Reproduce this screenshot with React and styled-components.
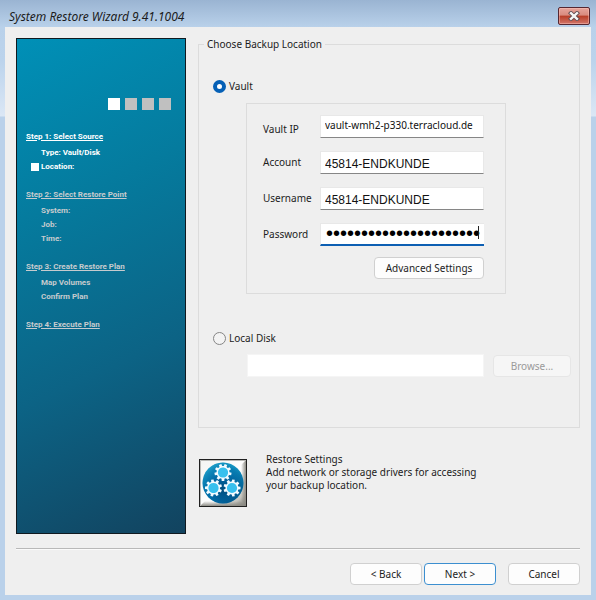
import React, { useState } from "react";
import styled, { createGlobalStyle, css } from "styled-components";

const GlobalStyle = createGlobalStyle`
  *, *::before, *::after { box-sizing: border-box; }
  body { margin: 0; font: 10px/13px "Noto Sans", sans-serif; color: #1c1c1c; }
  button, input { font: inherit; color: inherit; }
`;

const Window = styled.div`
  min-height: 100vh;
  display: flex;
  flex-direction: column;
  padding: 0 5px 5px;
  background:
    linear-gradient(#9ab4d2 0, #b9d1ea 27px, #bbd3ec 60px, #dbe7f5 116px, transparent 117px),
    #bad1ea;
`;

const TitleBar = styled.header`
  height: 27px;
  display: flex;
  align-items: center;
  justify-content: space-between;
  padding: 5px 1px 0 4px;
`;

const Title = styled.h1`
  margin: 0;
  font-size: 12px;
  font-weight: 400;
  font-style: italic;
`;

const CloseButton = styled.button`
  display: grid;
  place-items: center;
  width: 32px;
  height: 18px;
  padding: 0;
  margin-bottom: 1px;
  border: 1px solid #552731;
  border-radius: 2px;
  background: linear-gradient(#e6a49b 0%, #d88a7e 45%, #b83d27 50%, #d2766a 100%);
  box-shadow: inset 0 0 0 1px rgba(255, 200, 190, 0.45);
`;

const Body = styled.main`
  flex: 1;
  display: flex;
  flex-direction: column;
  padding: 11px 11px 10px;
  background: #efefef;
`;

const Columns = styled.div`
  flex: 1;
  display: flex;
  gap: 12px;
`;

const Sidebar = styled.nav`
  flex: 0 0 170px;
  border: 1px solid #10191f;
  padding: 59px 9px 0;
  background: linear-gradient(155deg, #0090b7 0%, #057b9e 32%, #0c6385 65%, #12435f 100%);
  color: #c6cbce;
  font-family: Roboto, sans-serif;
  font-size: 8px;
  line-height: 14px;
  font-weight: 700;
`;

const Progress = styled.div`
  display: flex;
  justify-content: flex-end;
  gap: 5px;
  padding-right: 5px;
  margin-bottom: 20px;
`;

const ProgressBox = styled.span`
  width: 12px;
  height: 12px;
  background: ${(p) => (p.$current ? "#fff" : "#c0c0c0")};
`;

const Step = styled.section`
  margin-bottom: 14px;
  color: ${(p) => (p.$current ? "#fff" : "inherit")};
`;

const StepTitle = styled.h2`
  margin: 0 0 2px;
  font-size: inherit;
  text-decoration: underline;
`;

const StepItem = styled.div`
  display: flex;
  align-items: center;
  gap: 2px;
  padding-left: ${(p) => (p.$active ? "5px" : "15px")};
`;

const Marker = styled.span`
  width: 8px;
  height: 8px;
  background: #fff;
`;

const Content = styled.div`
  flex: 1;
  min-width: 0;
`;

const Group = styled.fieldset`
  margin: 0;
  min-width: 0;
  border: 1px solid #dcdcdc;
  padding: 28px 8px 50px 14px;
`;

const Legend = styled.legend`
  margin-left: -9px;
  padding: 0 3px;
`;

const RadioLabel = styled.label`
  display: flex;
  align-items: center;
  gap: 3px;
  height: 14px;
`;

const Radio = styled.input`
  appearance: none;
  width: 13px;
  height: 13px;
  margin: 0;
  border: 1px solid #858585;
  border-radius: 50%;
  background: #f3f3f3;
  &:checked {
    border: 4px solid #0560b6;
    background: #fff;
  }
`;

const VaultPanel = styled.div`
  display: flex;
  flex-direction: column;
  gap: 13px;
  margin: 10px 65px 37px 33px;
  padding: 11px 21px 14px 16px;
  border: 1px solid #dcdcdc;
`;

const FieldRow = styled.div`
  display: flex;
  align-items: center;
  height: 23px;
`;

const FieldLabel = styled.label`
  flex: 0 0 57px;
  padding-top: ${(p) => (p.$low ? "6px" : "0")};
`;

const InputWrap = styled.div`
  position: relative;
  flex: 1;
  min-width: 0;
`;

const TextInput = styled.input`
  display: block;
  width: 100%;
  height: 23px;
  margin: 0;
  padding: 2px 4px 0;
  border: 1px solid #e8e8e8;
  border-bottom-color: #868686;
  background: #fff;
  color: #111;
  outline: none;
  font: 12px "Liberation Sans", sans-serif;
  ${(p) => p.$host && css`
    padding: 0 4px 4px;
    font: 10px "Noto Sans", sans-serif;
  `}
  ${(p) => p.$focused && css`
    padding: 0 4px 2px 5px;
    border-right: 0;
    border-bottom: 2px solid #0d5fb3;
    color: #000;
    font: 20px "Liberation Sans", sans-serif;
  `}
  ${(p) => p.$plain && css`
    border-color: #f5f5f5;
  `}
`;

const Caret = styled.span`
  position: absolute;
  top: 3px;
  right: 5px;
  width: 1px;
  height: 13px;
  background: #222;
`;

const Button = styled.button`
  height: 22px;
  width: ${(p) => p.$width || "72px"};
  padding: 0;
  border: 1px solid ${(p) => (p.$primary ? "#3c8fd0" : "#d0d0d0")};
  border-radius: 4px;
  background: #fdfdfd;
  line-height: 18px;
  &:disabled {
    color: #9a9a9a;
    background: #f6f6f6;
    border-color: #e6e6e6;
  }
`;

const AdvancedButton = styled(Button)`
  align-self: flex-end;
  margin-top: -2px;
`;

const DiskRow = styled.div`
  display: flex;
  align-items: center;
  gap: 9px;
  margin: 9px 0 0 34px;
`;

const SettingsInfo = styled.section`
  display: flex;
  gap: 19px;
  margin: 31px 0 0 1px;
`;

const SettingsButton = styled.button`
  flex: none;
  width: 48px;
  height: 48px;
  padding: 0;
  border: 1px solid #202020;
  background: #fff;
`;

const SettingsText = styled.div`
  margin-top: -6px;
  max-width: 230px;
`;

const SettingsHeading = styled.h2`
  margin: 0;
  font-size: inherit;
  font-weight: 400;
`;

const Description = styled.p`
  margin: 0;
`;

const Divider = styled.hr`
  width: 100%;
  height: 2px;
  margin: 14px 0 13px;
  border: 0;
  border-top: 1px solid #b8b8b8;
  border-bottom: 1px solid #fafafa;
`;

const Footer = styled.footer`
  display: flex;
  justify-content: flex-end;
  gap: 2px;
`;

const CancelButton = styled(Button)`
  margin-left: 10px;
`;

const gearPath = (() => {
  const teeth = 9;
  const points = [];
  for (let i = 0; i < teeth; i += 1) {
    const mid = (i / teeth) * Math.PI * 2;
    [[-0.22, 6.5], [-0.15, 8.6], [0.15, 8.6], [0.22, 6.5]].forEach(([offset, r]) => {
      const a = mid + offset;
      points.push(`${(Math.cos(a) * r).toFixed(2)} ${(Math.sin(a) * r).toFixed(2)}`);
    });
  }
  return `M${points.join("L")}Z`;
})();

const gears = [[23, 12.5, 10], [13.5, 28, 22], [32, 28, 0]];

function GearsIcon() {
  return (
    <svg width="46" height="46" viewBox="0 0 46 46" aria-hidden="true" display="block">
      <defs>
        <linearGradient id="bevel" x1="0" y1="0" x2="1" y2="1">
          <stop offset="0" stopColor="#f4f4f2" />
          <stop offset="0.6" stopColor="#ffffff" />
          <stop offset="0.85" stopColor="#c4c3bc" />
          <stop offset="1" stopColor="#77766f" />
        </linearGradient>
        <linearGradient id="edgeRight" x1="0" y1="0" x2="1" y2="0">
          <stop offset="0" stopColor="#8d8c85" stopOpacity="0" />
          <stop offset="1" stopColor="#8d8c85" />
        </linearGradient>
        <linearGradient id="edgeBottom" x1="0" y1="0" x2="0" y2="1">
          <stop offset="0" stopColor="#8d8c85" stopOpacity="0" />
          <stop offset="1" stopColor="#8d8c85" />
        </linearGradient>
        <radialGradient id="globe" cx="0.5" cy="0.65" r="0.62">
          <stop offset="0" stopColor="#004878" />
          <stop offset="0.45" stopColor="#0065a2" />
          <stop offset="0.85" stopColor="#087fb4" />
          <stop offset="1" stopColor="#1595c2" />
        </radialGradient>
        <linearGradient id="shade" x1="0" y1="0" x2="1" y2="1">
          <stop offset="0" stopColor="#39c2e4" stopOpacity="0.7" />
          <stop offset="0.4" stopColor="#0879ae" stopOpacity="0" />
          <stop offset="1" stopColor="#00345f" stopOpacity="0.65" />
        </linearGradient>
      </defs>
      <rect width="46" height="46" fill="url(#bevel)" />
      <path d="M46 0V46L41 41V5Z" fill="url(#edgeRight)" />
      <path d="M0 46H46L41 41H5Z" fill="url(#edgeBottom)" />
      <path d="M0.5 46V0.5H46" fill="none" stroke="#b9b9b6" />
      <circle cx="23" cy="23" r="20.5" fill="url(#globe)" />
      <circle cx="23" cy="23" r="20.5" fill="url(#shade)" />
      {gears.map(([x, y, turn]) => (
        <g key={`${x}-${y}`} transform={`translate(${x} ${y}) rotate(${turn})`}>
          <path d={gearPath} fill="#f4fbff" />
          <circle r="5.1" fill="#38c0ee" />
        </g>
      ))}
    </svg>
  );
}

const steps = [
  { title: "Step 1: Select Source", items: ["Type: Vault/Disk", "Location:"], active: 1 },
  { title: "Step 2: Select Restore Point", items: ["System:", "Job:", "Time:"] },
  { title: "Step 3: Create Restore Plan", items: ["Map Volumes", "Confirm Plan"] },
  { title: "Step 4: Execute Plan", items: [] },
];

const fields = [
  { id: "vault-ip", label: "Vault IP", value: "vault-wmh2-p330.terracloud.de", host: true },
  { id: "account", label: "Account", value: "45814-ENDKUNDE" },
  { id: "username", label: "Username", value: "45814-ENDKUNDE" },
  { id: "password", label: "Password", value: "x".repeat(22), secret: true },
];

export default function App() {
  const [source, setSource] = useState("vault");
  return (
    <>
      <GlobalStyle />
      <Window>
        <TitleBar>
          <Title>System Restore Wizard 9.41.1004</Title>
          <CloseButton type="button" aria-label="Close">
            <svg width="12" height="10" viewBox="0 0 12 10" aria-hidden="true">
              <path d="M3 2.2L9 7.8M9 2.2L3 7.8" stroke="#5e4a50" strokeWidth="4.2" strokeLinecap="square" />
              <path d="M3 2.2L9 7.8M9 2.2L3 7.8" stroke="#f5f5f5" strokeWidth="2.4" strokeLinecap="square" />
            </svg>
          </CloseButton>
        </TitleBar>
        <Body>
          <Columns>
            <Sidebar aria-label="Wizard steps">
              <Progress>
                {steps.map((step, i) => <ProgressBox key={step.title} $current={i === 0} />)}
              </Progress>
              {steps.map((step, i) => (
                <Step key={step.title} $current={i === 0}>
                  <StepTitle>{step.title}</StepTitle>
                  {step.items.map((item, n) => (
                    <StepItem key={item} $active={step.active === n}>
                      {step.active === n && <Marker />}
                      {item}
                    </StepItem>
                  ))}
                </Step>
              ))}
            </Sidebar>
            <Content>
              <Group>
                <Legend>Choose Backup Location</Legend>
                <RadioLabel>
                  <Radio type="radio" name="source" checked={source === "vault"} onChange={() => setSource("vault")} />
                  Vault
                </RadioLabel>
                <VaultPanel>
                  {fields.map((f) => (
                    <FieldRow key={f.id}>
                      <FieldLabel htmlFor={f.id} $low={f.host}>{f.label}</FieldLabel>
                      <InputWrap>
                        <TextInput
                          id={f.id}
                          type={f.secret ? "password" : "text"}
                          defaultValue={f.value}
                          $host={f.host}
                          $focused={f.secret}
                        />
                        {f.secret && <Caret />}
                      </InputWrap>
                    </FieldRow>
                  ))}
                  <AdvancedButton type="button" $width="110px">Advanced Settings</AdvancedButton>
                </VaultPanel>
                <RadioLabel>
                  <Radio type="radio" name="source" checked={source === "disk"} onChange={() => setSource("disk")} />
                  Local Disk
                </RadioLabel>
                <DiskRow>
                  <InputWrap>
                    <TextInput type="text" aria-label="Local disk path" $plain disabled={source !== "disk"} />
                  </InputWrap>
                  <Button type="button" $width="78px" disabled={source !== "disk"}>Browse...</Button>
                </DiskRow>
              </Group>
              <SettingsInfo>
                <SettingsButton type="button" aria-label="Restore Settings"><GearsIcon /></SettingsButton>
                <SettingsText>
                  <SettingsHeading>Restore Settings</SettingsHeading>
                  <Description>Add network or storage drivers for accessing your backup location.</Description>
                </SettingsText>
              </SettingsInfo>
            </Content>
          </Columns>
          <Divider />
          <Footer>
            <Button type="button">&lt; Back</Button>
            <Button type="button" $primary>Next &gt;</Button>
            <CancelButton type="button">Cancel</CancelButton>
          </Footer>
        </Body>
      </Window>
    </>
  );
}
